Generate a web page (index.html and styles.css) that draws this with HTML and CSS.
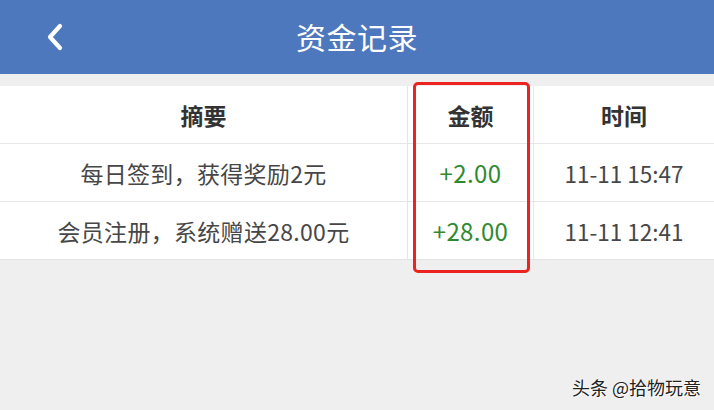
FILE: index.html
```html
<!DOCTYPE html>
<html lang="zh">
<head>
<meta charset="utf-8">
<link rel="stylesheet" href="styles.css">
</head>
<body>
<div class="page">
  <header class="topbar">
    <span class="back">
      <svg width="22" height="30" viewBox="0 0 22 30"><path d="M16 4 L6 15 L16 26" fill="none" stroke="#fff" stroke-width="4.2" stroke-linecap="round" stroke-linejoin="round"/></svg>
    </span>
    <h1 class="title">资金记录</h1>
  </header>
  <div class="table-wrap">
    <div class="table">
      <div class="cell head">摘要</div>
      <div class="cell head">金额</div>
      <div class="cell head">时间</div>
      <div class="cell desc">每日签到，获得奖励2元</div>
      <div class="cell money">+2.00</div>
      <div class="cell time">11-11 15:47</div>
      <div class="cell desc">会员注册，系统赠送28.00元</div>
      <div class="cell money">+28.00</div>
      <div class="cell time">11-11 12:41</div>
    </div>
    <div class="highlight"></div>
  </div>
  <div class="watermark">头条 @拾物玩意</div>
</div>
</body>
</html>
```
FILE: styles.css
```css
* { box-sizing: border-box; }
html, body { margin: 0; padding: 0; }
body {
  width: 714px;
  height: 410px;
  overflow: hidden;
  background: #efefef;
  font-family: "Noto Sans CJK SC", "Noto Sans", sans-serif;
  color: #3a3a3a;
}
.page { position: relative; width: 714px; height: 410px; }
.topbar {
  height: 74px;
  background: #4e78bd;
  display: flex;
  align-items: center;
  justify-content: center;
  position: relative;
}
.back {
  position: absolute;
  left: 44px;
  top: 22px;
  width: 22px;
  height: 30px;
  display: flex;
}
.title {
  margin: 0;
  color: #fff;
  font-size: 30px;
  font-weight: 400;
  letter-spacing: 0.5px;
  line-height: 1;
  margin-top: -2px;
}
.table-wrap {
  position: relative;
  margin-top: 12px;
}
.table {
  display: grid;
  grid-template-columns: 408px 126px 180px;
  background: #fff;
  border-bottom: 1px solid #e4e4e4;
}
.cell {
  height: 58px;
  display: flex;
  align-items: center;
  justify-content: center;
  font-size: 22px;
  border-top: 1px solid #e6e6e6;
  border-right: 1px solid #e6e6e6;
  color: #474747;
  white-space: nowrap;
}
.cell.head {
  border-top: none;
  height: 57px;
  font-size: 23px;
  font-weight: 700;
  color: #333;
}
.cell:nth-child(3n) { border-right: none; }
.cell.desc { font-size: 23px; letter-spacing: 0.3px; }
.cell.money { color: #2f8a2f; font-size: 24px; letter-spacing: 0.4px; }
.cell.time { font-size: 22.5px; }
.highlight {
  position: absolute;
  left: 413px;
  top: -4px;
  width: 117px;
  height: 191px;
  border: 3px solid #ec2320;
  border-radius: 5px;
}
.watermark {
  position: absolute;
  right: 13px;
  bottom: 10px;
  font-size: 18px;
  color: #222;
  text-shadow: 0 0 2px #fff, 1px 1px 0 #fff;
}
```
